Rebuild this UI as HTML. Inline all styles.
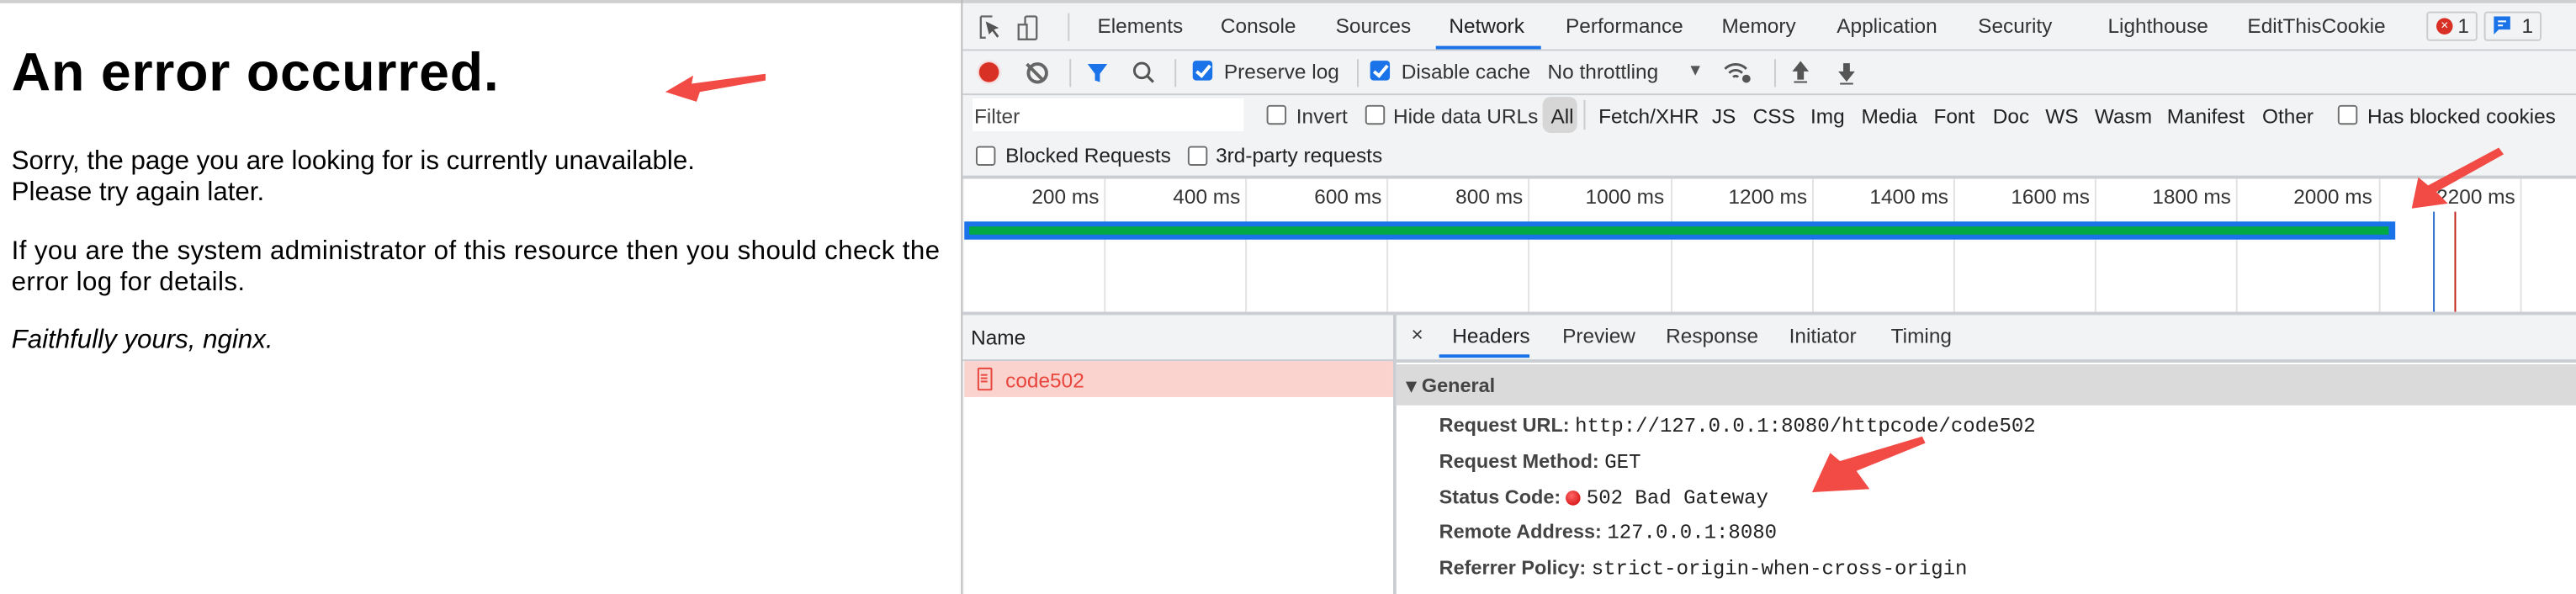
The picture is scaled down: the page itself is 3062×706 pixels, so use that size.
<!DOCTYPE html>
<html><head><meta charset="utf-8"><style>
html,body{margin:0;padding:0;width:3062px;height:706px;overflow:hidden;background:#fff}
#w{position:absolute;left:0;top:0;width:1568px;height:362px;transform-origin:0 0;transform:scale(1.9528,1.9503);font-family:"Liberation Sans",sans-serif}
.a{position:absolute;white-space:nowrap}
.t{font-size:12.5px;color:#333}
.cb{position:absolute;width:10px;height:10px;border:1px solid #6e6e6e;border-radius:2px;background:#fff}
.cbk{background:#1a73e8;border-color:#1a73e8}
.cbk:after{content:"";position:absolute;left:3px;top:0px;width:3px;height:7px;border:solid #fff;border-width:0 2px 2px 0;transform:rotate(40deg)}
.g{position:absolute;top:109px;height:81px;width:1px;background:#e2e2e2}
.lb{position:absolute;font-size:12.5px;color:#333;text-align:right;width:80px;top:113px}
.hl{position:absolute;left:876px;font-size:12px;font-weight:bold;color:#444}
.mv{font-family:"Liberation Mono",monospace;font-weight:normal;color:#222;font-size:12.3px}
</style></head><body><div id="w">
<div class="a" style="left:0;top:0;width:1568px;height:2px;background:#d0d0d0"></div>
<!-- left page -->
<div class="a" style="left:7px;top:25px;font-size:33px;font-weight:bold;color:#000;letter-spacing:0.4px">An error occurred.</div>
<div class="a" style="left:7px;top:89px;font-size:16px;line-height:19px;color:#000">Sorry, the page you are looking for is currently unavailable.<br>Please try again later.</div>
<div class="a" style="left:7px;top:144px;font-size:16px;line-height:19px;color:#000;letter-spacing:0.2px">If you are the system administrator of this resource then you should check the<br>error log for details.</div>
<div class="a" style="left:7px;top:199px;font-size:16px;color:#000;font-style:italic">Faithfully yours, nginx.</div>
<div class="a" style="left:585px;top:0;width:1px;height:362px;background:#b8b8b8"></div>
<!-- devtools -->
<div class="a" style="left:586px;top:2px;width:982px;height:360px;background:#f1f3f4"></div>
<svg class="a" style="left:594px;top:8px" width="40" height="18" viewBox="0 0 40 18"><path d="M3 2h7M3 2v13h3" stroke="#666" fill="none" stroke-width="1.2"/><path d="M6 5l8 4-3 1 3 4-1 1-3-4-2 2z" fill="#555"/><rect x="30" y="2" width="7" height="14" rx="1" stroke="#666" fill="none" stroke-width="1.2"/><rect x="26" y="7" width="5" height="9" stroke="#666" fill="#f1f3f4" stroke-width="1.2"/></svg>
<div class="a" style="left:650px;top:8px;width:1px;height:17px;background:#ccc"></div>
<div class="a t" style="left:668px;top:9px">Elements</div>
<div class="a t" style="left:743px;top:9px">Console</div>
<div class="a t" style="left:813px;top:9px">Sources</div>
<div class="a t" style="left:882px;top:9px;color:#202124">Network</div>
<div class="a" style="left:874px;top:28px;width:64px;height:2px;background:#1a73e8"></div>
<div class="a t" style="left:953px;top:9px">Performance</div>
<div class="a t" style="left:1048px;top:9px">Memory</div>
<div class="a t" style="left:1118px;top:9px">Application</div>
<div class="a t" style="left:1204px;top:9px">Security</div>
<div class="a t" style="left:1283px;top:9px">Lighthouse</div>
<div class="a t" style="left:1368px;top:9px">EditThisCookie</div>
<div class="a" style="left:1477px;top:7px;width:31px;height:18px;border:1px solid #ccc;border-radius:2px;box-sizing:border-box"></div>
<div class="a" style="left:1483px;top:11px;width:10px;height:10px;border-radius:5px;background:#d93025;color:#fff;font-size:8px;line-height:10px;text-align:center">×</div>
<div class="a t" style="left:1496px;top:9px">1</div>
<div class="a" style="left:1512px;top:7px;width:35px;height:18px;border:1px solid #ccc;border-radius:2px;box-sizing:border-box"></div>
<svg class="a" style="left:1517px;top:9px" width="12" height="14"><path d="M1 1h10v8H4l-3 3z" fill="#1a73e8"/><path d="M3.5 4h5M3.5 6.5h3" stroke="#fff" stroke-width="1"/></svg>
<div class="a t" style="left:1535px;top:9px">1</div>
<div class="a" style="left:586px;top:30px;width:982px;height:1px;background:#cacdd1"></div>
<!-- toolbar -->
<div class="a" style="left:596px;top:38px;width:12px;height:12px;border-radius:6px;background:#d93025;box-shadow:0 0 2px #f88"></div>
<div class="a" style="left:625px;top:38px;width:9px;height:9px;border:2px solid #666;border-radius:7px"></div>
<div class="a" style="left:629px;top:37px;width:2px;height:14px;background:#666;transform:rotate(-45deg)"></div>
<div class="a" style="left:651px;top:36px;width:1px;height:17px;background:#ccc"></div>
<svg class="a" style="left:661px;top:37px" width="14" height="14"><path d="M1 2h12l-4.5 6v5l-3-1v-4z" fill="#1a73e8"/></svg>
<svg class="a" style="left:689px;top:37px" width="14" height="14"><circle cx="6" cy="6" r="4.5" stroke="#555" fill="none" stroke-width="1.5"/><path d="M9 9l4 4" stroke="#555" stroke-width="1.6"/></svg>
<div class="a" style="left:715px;top:36px;width:1px;height:17px;background:#ccc"></div>
<div class="cbk cb" style="left:726px;top:37px"></div>
<div class="a t" style="left:745px;top:37px">Preserve log</div>
<div class="a" style="left:826px;top:36px;width:1px;height:17px;background:#ccc"></div>
<div class="cbk cb" style="left:834px;top:37px"></div>
<div class="a t" style="left:853px;top:37px">Disable cache</div>
<div class="a t" style="left:942px;top:37px">No throttling</div>
<div class="a" style="left:1027px;top:38px;font-size:10px;color:#555">▼</div>
<svg class="a" style="left:1048px;top:36px" width="20" height="16"><path d="M2 6a9 9 0 0 1 13 0M4.5 8.5a5.5 5.5 0 0 1 8 0M7 11a2 2 0 0 1 3 0" stroke="#555" fill="none" stroke-width="1.5"/><circle cx="15" cy="12" r="2.5" fill="#555"/></svg>
<div class="a" style="left:1080px;top:36px;width:1px;height:17px;background:#ccc"></div>
<svg class="a" style="left:1089px;top:36px" width="48" height="16"><path d="M7 2l-4 5h2.5v5h3v-5h2.5z M3 14h8" fill="#555" stroke="#555" stroke-width="1"/><path d="M35 13l-4-5h2.5v-5h3v5h2.5z M31 15h8" fill="#555" stroke="#555" stroke-width="1"/></svg>
<div class="a" style="left:586px;top:57px;width:982px;height:1px;background:#cacdd1"></div>
<!-- filter row -->
<div class="a" style="left:592px;top:60px;width:165px;height:20px;background:#fff"></div>
<div class="a t" style="left:593px;top:64px;color:#444">Filter</div>
<div class="cb" style="left:771px;top:64px"></div><div class="a t" style="left:789px;top:64px">Invert</div>
<div class="cb" style="left:831px;top:64px"></div><div class="a t" style="left:848px;top:64px">Hide data URLs</div>
<div class="a" style="left:939px;top:59px;width:21px;height:22px;border-radius:5px;background:#d6d6d6"></div>
<div class="a t" style="left:944px;top:64px;color:#222">All</div>
<div class="a" style="left:964px;top:61px;width:1px;height:18px;background:#ccc"></div>
<div class="a t" style="left:973px;top:64px;color:#222">Fetch/XHR</div>
<div class="a t" style="left:1042px;top:64px;color:#222">JS</div>
<div class="a t" style="left:1067px;top:64px;color:#222">CSS</div>
<div class="a t" style="left:1102px;top:64px;color:#222">Img</div>
<div class="a t" style="left:1133px;top:64px;color:#222">Media</div>
<div class="a t" style="left:1177px;top:64px;color:#222">Font</div>
<div class="a t" style="left:1213px;top:64px;color:#222">Doc</div>
<div class="a t" style="left:1245px;top:64px;color:#222">WS</div>
<div class="a t" style="left:1275px;top:64px;color:#222">Wasm</div>
<div class="a t" style="left:1319px;top:64px;color:#222">Manifest</div>
<div class="a t" style="left:1377px;top:64px;color:#222">Other</div>
<div class="cb" style="left:1423px;top:64px"></div><div class="a t" style="left:1441px;top:64px;color:#222">Has blocked cookies</div>
<div class="cb" style="left:594px;top:89px"></div><div class="a t" style="left:612px;top:88px;color:#222">Blocked Requests</div>
<div class="cb" style="left:723px;top:89px"></div><div class="a t" style="left:740px;top:88px;color:#222">3rd-party requests</div>
<div class="a" style="left:586px;top:107px;width:982px;height:2px;background:#cacdd1"></div>
<!-- timeline -->
<div class="a" style="left:587px;top:109px;width:981px;height:81px;background:#fff"></div>
<div class="g" style="left:672px"></div><div class="g" style="left:758px"></div><div class="g" style="left:844px"></div><div class="g" style="left:930px"></div><div class="g" style="left:1017px"></div><div class="g" style="left:1103px"></div><div class="g" style="left:1189px"></div><div class="g" style="left:1275px"></div><div class="g" style="left:1361px"></div><div class="g" style="left:1448px"></div><div class="g" style="left:1534px"></div>
<div class="lb" style="left:589px">200 ms</div><div class="lb" style="left:675px">400 ms</div><div class="lb" style="left:761px">600 ms</div><div class="lb" style="left:847px">800 ms</div><div class="lb" style="left:933px">1000 ms</div><div class="lb" style="left:1020px">1200 ms</div><div class="lb" style="left:1106px">1400 ms</div><div class="lb" style="left:1192px">1600 ms</div><div class="lb" style="left:1278px">1800 ms</div><div class="lb" style="left:1364px">2000 ms</div><div class="lb" style="left:1451px">2200 ms</div>
<div class="a" style="left:587px;top:135px;width:871px;height:11px;background:#1a73e8"></div>
<div class="a" style="left:590px;top:138px;width:864px;height:5px;background:#00a846"></div>
<div class="a" style="left:1481px;top:129px;width:1px;height:61px;background:#2a6fc9"></div>
<div class="a" style="left:1494px;top:129px;width:1px;height:61px;background:#c0231a"></div>
<div class="a" style="left:586px;top:190px;width:982px;height:2px;background:#cacdd1"></div>
<!-- bottom -->
<div class="a" style="left:586px;top:192px;width:262px;height:27px;background:#f1f3f4"></div>
<div class="a t" style="left:591px;top:199px;color:#222">Name</div>
<div class="a" style="left:586px;top:219px;width:262px;height:1px;background:#cacdd1"></div>
<div class="a" style="left:587px;top:220px;width:261px;height:22px;background:#fad3cf"></div>
<div class="a" style="left:595px;top:224px;width:7px;height:12px;border:1px solid #e8453c;border-radius:1px"></div>
<div class="a" style="left:597px;top:228px;width:4px;height:1px;background:#e8453c;box-shadow:0 2px #e8453c,0 4px #e8453c"></div>
<div class="a t" style="left:612px;top:225px;color:#e8453c">code502</div>
<div class="a" style="left:587px;top:242px;width:261px;height:120px;background:#fff"></div>
<div class="a" style="left:848px;top:192px;width:2px;height:170px;background:#cacdd1"></div>
<div class="a" style="left:850px;top:192px;width:718px;height:27px;background:#f1f3f4"></div>
<div class="a t" style="left:859px;top:197px">×</div>
<div class="a t" style="left:884px;top:198px;color:#202124">Headers</div>
<div class="a" style="left:876px;top:216px;width:55px;height:2px;background:#1a73e8"></div>
<div class="a t" style="left:951px;top:198px">Preview</div>
<div class="a t" style="left:1014px;top:198px">Response</div>
<div class="a t" style="left:1089px;top:198px">Initiator</div>
<div class="a t" style="left:1151px;top:198px">Timing</div>
<div class="a" style="left:850px;top:219px;width:718px;height:2px;background:#cacdd1"></div>
<div class="a" style="left:850px;top:221px;width:718px;height:141px;background:#fff"></div>
<div class="a" style="left:850px;top:222px;width:718px;height:25px;background:#dadada"></div>
<div class="a" style="left:856px;top:228px;font-size:12px;font-weight:bold;color:#444">▾ General</div>
<div class="hl" style="top:252px">Request URL: <span class="mv">http://127.0.0.1:8080/httpcode/code502</span></div>
<div class="hl" style="top:274px">Request Method: <span class="mv">GET</span></div>
<div class="hl" style="top:296px">Status Code: <span style="display:inline-block;width:9px;height:9px;border-radius:5px;background:radial-gradient(circle at 40% 35%,#f66,#c00);vertical-align:-1px"></span> <span class="mv">502 Bad Gateway</span></div>
<div class="hl" style="top:317px">Remote Address: <span class="mv">127.0.0.1:8080</span></div>
<div class="hl" style="top:339px">Referrer Policy: <span class="mv">strict-origin-when-cross-origin</span></div>
<!-- arrows -->
<svg class="a" style="left:0;top:0" width="1568" height="362">
<path d="M466 45 L466 49 L426 56 L424 62 L405 56 L422 46 L421 51 Z" fill="#f24b45"/>
<path d="M1521 90 L1524 94 L1483 117 L1490 124 L1468 127 L1472 108 L1478 113 Z" fill="#f24b45"/>
<path d="M1170 266 L1172 270 L1130 287 L1138 298 L1103 300 L1114 276 L1120 281 Z" fill="#f24b45"/>
</svg>
</div></body></html>
